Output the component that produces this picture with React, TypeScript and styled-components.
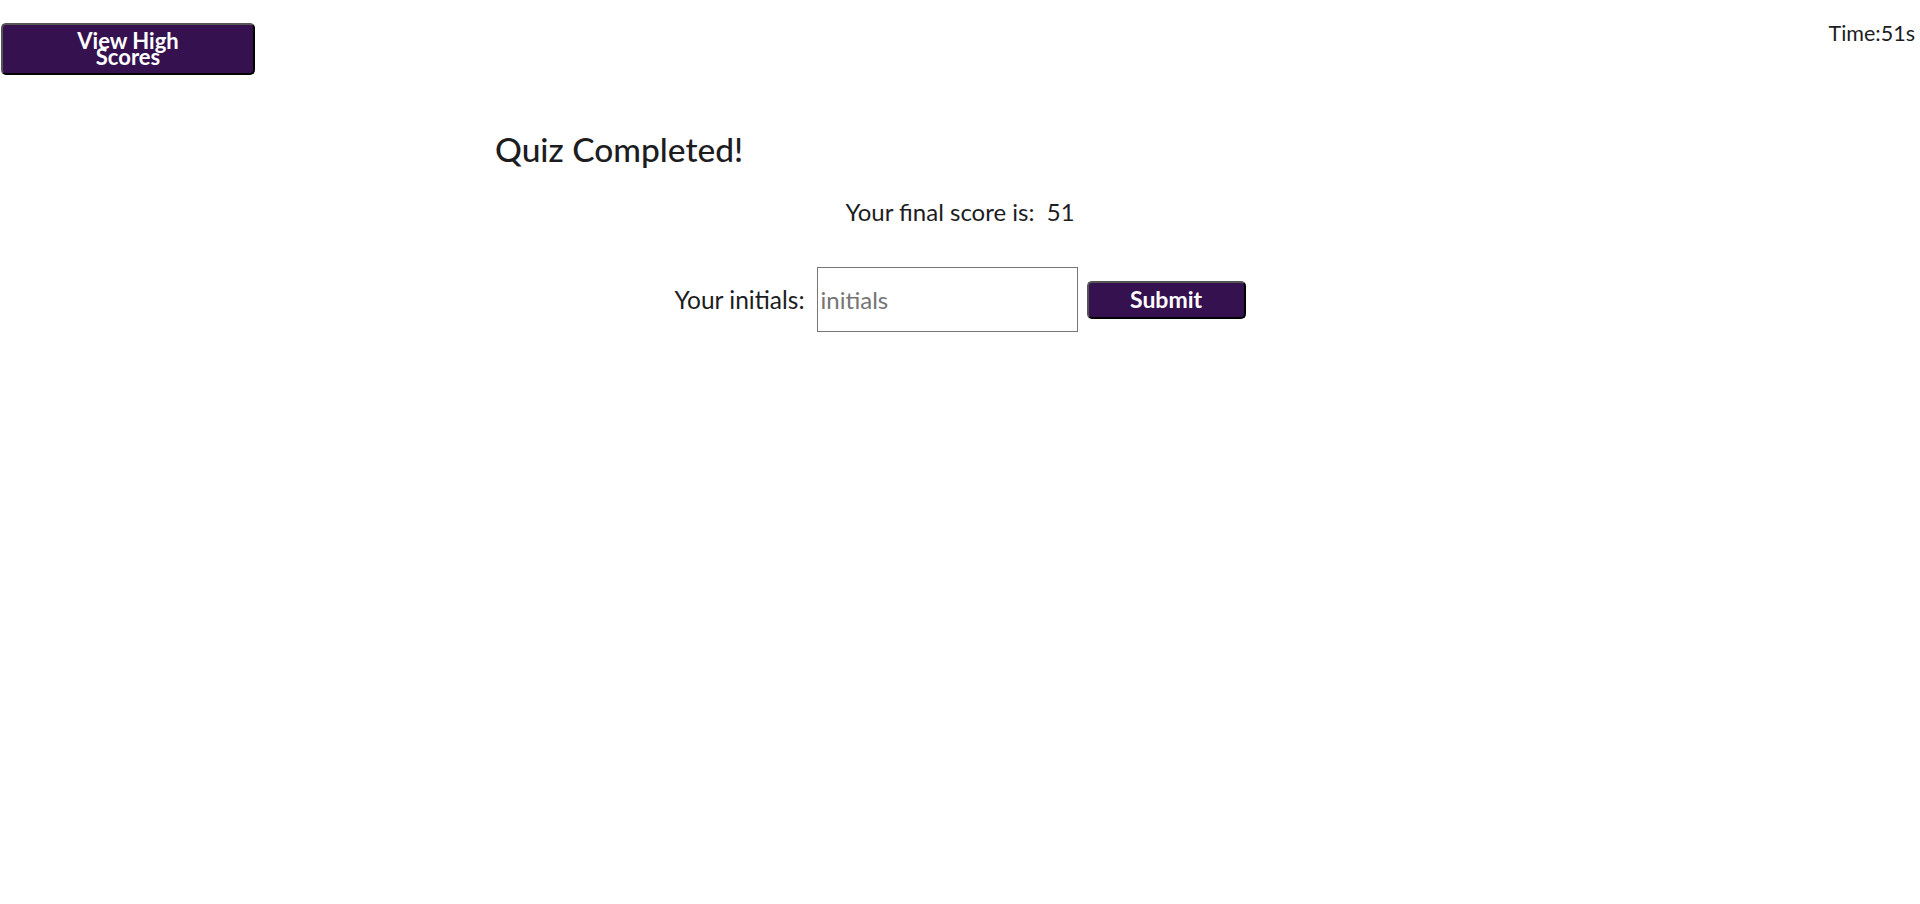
import React from "react";
import styled, { createGlobalStyle } from "styled-components";

const Global = createGlobalStyle`
  html, body { margin: 0; padding: 0; background: #ffffff; }
  body { font-family: "Lato", "Noto Sans", sans-serif; color: #1d1d1f; }
`;

const Header = styled.header`
  display: flex;
  justify-content: space-between;
  align-items: flex-start;
  padding: 23px 5px 0 1px;
`;

const PurpleButton = styled.button<{ $w: number; $h: number; $fs: number; $px: number }>`
  width: ${(p) => p.$w}px;
  height: ${(p) => p.$h}px;
  background: #36114f;
  color: #ffffff;
  border: 2px outset #555;
  border-right-color: #111;
  border-bottom-color: #111;
  border-radius: 5px;
  font-family: "Lato", sans-serif;
  font-weight: 700;
  font-size: ${(p) => p.$fs}px;
  line-height: 0.72;
  padding: 0 ${(p) => p.$px}px;
  cursor: pointer;
`;

const Timer = styled.div`
  font-size: 21.5px;
  line-height: 24px;
  margin-top: -2px;
`;

const Main = styled.main`
  width: 930px;
  margin: 0 auto;
  padding-top: 56px;
`;

const Title = styled.h2`
  font-size: 33.5px;
  font-weight: 500;
  margin: 0 0 32px 0;
  line-height: 36px;
`;

const Score = styled.p`
  text-align: center;
  font-size: 24px;
  margin: 0 0 42px 0;
  line-height: 26px;
`;

const Row = styled.div`
  display: flex;
  justify-content: center;
  align-items: center;
  gap: 8px;
  padding-bottom: 2px;
`;

const Label = styled.label`
  font-size: 24.5px;
  margin-right: 4px;
`;

const Input = styled.input`
  width: 261px;
  height: 65px;
  box-sizing: border-box;
  border: 1px solid #767676;
  font-family: "Lato", sans-serif;
  font-size: 24px;
  padding: 0 3px;
  margin-right: 1px;
  &::placeholder { color: #757575; }
`;

export default function App() {
  return (
    <>
      <Global />
      <Header>
        <PurpleButton $w={254} $h={52} $fs={22} $px={60}>View High Scores</PurpleButton>
        <Timer>Time:51s</Timer>
      </Header>
      <Main>
        <Title>Quiz Completed!</Title>
        <Score>Your final score is:&nbsp; 51</Score>
        <Row>
          <Label htmlFor="initials">Your initials:</Label>
          <Input id="initials" placeholder="initials" />
          <PurpleButton $w={159} $h={38} $fs={23} $px={0}>Submit</PurpleButton>
        </Row>
      </Main>
    </>
  );
}
